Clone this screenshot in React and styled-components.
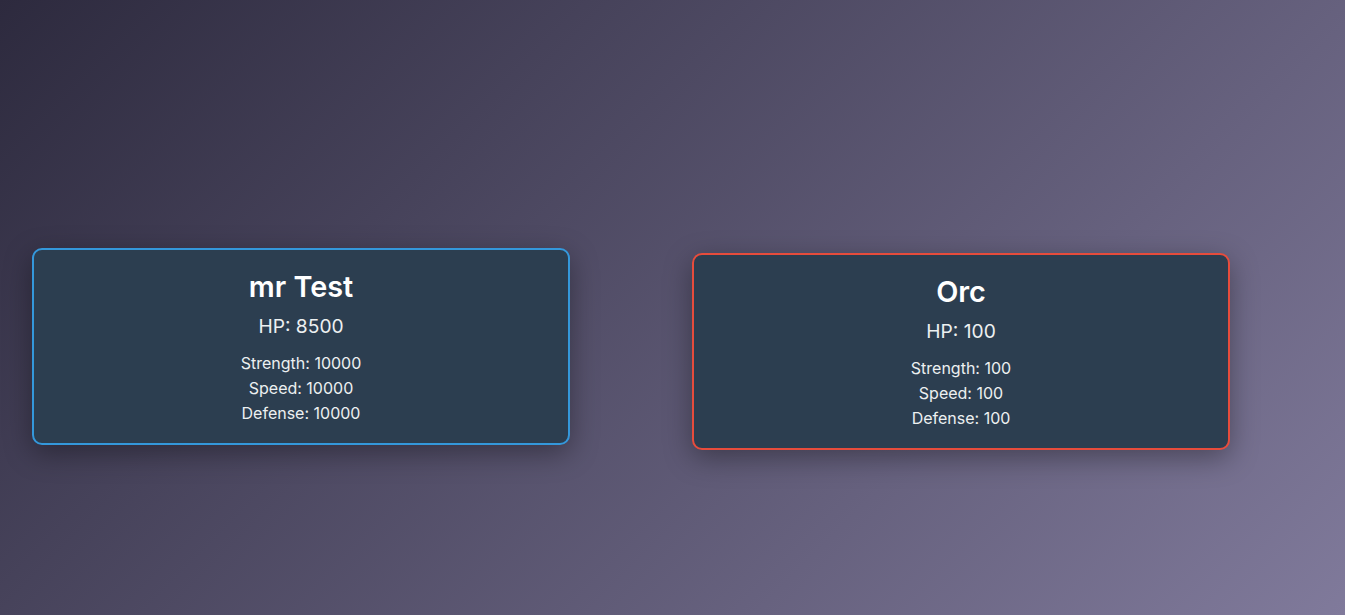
import React from "react";
import styled, { createGlobalStyle } from "styled-components";

const GlobalStyle = createGlobalStyle`
  html, body {
    margin: 0;
    padding: 0;
  }
  body {
    font-family: Inter, "Noto Sans", sans-serif;
    min-height: 100vh;
    background: linear-gradient(135deg, #2d2a3e 0%, #807a9b 100%);
    color: #ecf0f1;
  }
`;

const Arena = styled.div`
  min-height: 100vh;
  box-sizing: border-box;
  display: flex;
  align-items: flex-start;
  gap: 122px;
  padding: 248px 32px 0;
`;

const Card = styled.div`
  width: 538px;
  flex-shrink: 0;
  box-sizing: border-box;
  margin-top: ${(p) => (p.enemy ? "5px" : "0")};
  background: #2c3e50;
  border: 2px solid ${(p) => (p.enemy ? "#e74c3c" : "#3498db")};
  border-radius: 10px;
  padding: 19px 16px 17px;
  text-align: center;
  box-shadow: 0 8px 28px rgba(0, 0, 0, 0.35);
`;

const Name = styled.h2`
  margin: 0;
  font-size: 28.8px;
  line-height: 36px;
  font-weight: 600;
  color: #ffffff;
`;

const Hp = styled.div`
  margin: 8px 0 12px;
  font-size: 19.2px;
  line-height: 26px;
  color: #ecf0f1;
`;

const Stat = styled.div`
  font-size: 16px;
  line-height: 25px;
  color: #ecf0f1;
`;

const fighters = [
  { name: "mr Test", hp: 8500, strength: 10000, speed: 10000, defense: 10000 },
  { name: "Orc", hp: 100, strength: 100, speed: 100, defense: 100, enemy: true },
];

export default function App() {
  return (
    <>
      <GlobalStyle />
      <Arena>
        {fighters.map((f) => (
          <Card key={f.name} enemy={f.enemy}>
            <Name>{f.name}</Name>
            <Hp>HP: {f.hp}</Hp>
            <Stat>Strength: {f.strength}</Stat>
            <Stat>Speed: {f.speed}</Stat>
            <Stat>Defense: {f.defense}</Stat>
          </Card>
        ))}
      </Arena>
    </>
  );
}
